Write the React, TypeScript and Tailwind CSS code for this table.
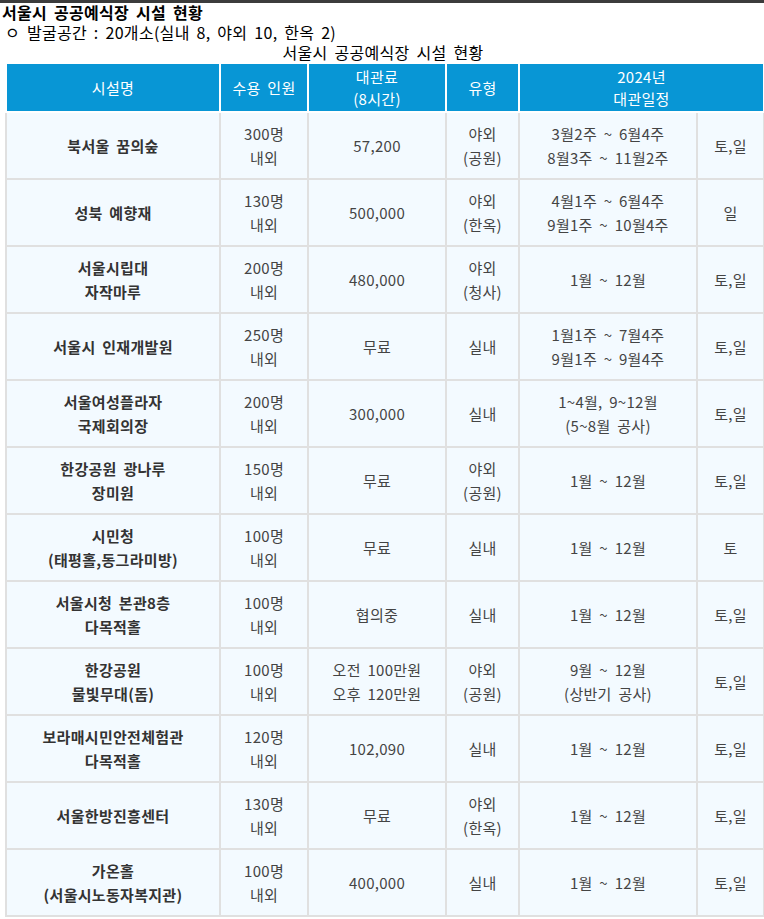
import React from "react";

type Row = { name: string[]; cap: string[]; fee: string[]; type: string[]; sched: string[]; days: string };

const rows: Row[] = [
  { name: ["북서울 꿈의숲"], cap: ["300명", "내외"], fee: ["57,200"], type: ["야외", "(공원)"], sched: ["3월2주 ~ 6월4주", "8월3주 ~ 11월2주"], days: "토,일" },
  { name: ["성북 예향재"], cap: ["130명", "내외"], fee: ["500,000"], type: ["야외", "(한옥)"], sched: ["4월1주 ~ 6월4주", "9월1주 ~ 10월4주"], days: "일" },
  { name: ["서울시립대", "자작마루"], cap: ["200명", "내외"], fee: ["480,000"], type: ["야외", "(청사)"], sched: ["1월 ~ 12월"], days: "토,일" },
  { name: ["서울시 인재개발원"], cap: ["250명", "내외"], fee: ["무료"], type: ["실내"], sched: ["1월1주 ~ 7월4주", "9월1주 ~ 9월4주"], days: "토,일" },
  { name: ["서울여성플라자", "국제회의장"], cap: ["200명", "내외"], fee: ["300,000"], type: ["실내"], sched: ["1~4월, 9~12월", "(5~8월 공사)"], days: "토,일" },
  { name: ["한강공원 광나루", "장미원"], cap: ["150명", "내외"], fee: ["무료"], type: ["야외", "(공원)"], sched: ["1월 ~ 12월"], days: "토,일" },
  { name: ["시민청", "(태평홀,동그라미방)"], cap: ["100명", "내외"], fee: ["무료"], type: ["실내"], sched: ["1월 ~ 12월"], days: "토" },
  { name: ["서울시청 본관8층", "다목적홀"], cap: ["100명", "내외"], fee: ["협의중"], type: ["실내"], sched: ["1월 ~ 12월"], days: "토,일" },
  { name: ["한강공원", "물빛무대(돔)"], cap: ["100명", "내외"], fee: ["오전 100만원", "오후 120만원"], type: ["야외", "(공원)"], sched: ["9월 ~ 12월", "(상반기 공사)"], days: "토,일" },
  { name: ["보라매시민안전체험관", "다목적홀"], cap: ["120명", "내외"], fee: ["102,090"], type: ["실내"], sched: ["1월 ~ 12월"], days: "토,일" },
  { name: ["서울한방진흥센터"], cap: ["130명", "내외"], fee: ["무료"], type: ["야외", "(한옥)"], sched: ["1월 ~ 12월"], days: "토,일" },
  { name: ["가온홀", "(서울시노동자복지관)"], cap: ["100명", "내외"], fee: ["400,000"], type: ["실내"], sched: ["1월 ~ 12월"], days: "토,일" },
];

function Lines({ lines }: { lines: string[] }) {
  return (
    <>
      {lines.map((l, i) => (
        <div key={i}>{l}</div>
      ))}
    </>
  );
}

const td = "border-2 border-[#e0e0e0] bg-[#f3faff] text-center align-middle h-[67px] p-0 leading-[24px]";
const th = "border-2 border-white bg-[#0896d5] text-white font-normal text-center align-middle p-0 leading-[22px]";

export default function App() {
  return (
    <div
      className="w-[764px] min-h-[919px] bg-white text-[#222] [word-spacing:3px] tracking-[0.3px]"
      style={{ fontFamily: '"Noto Sans CJK KR", "Noto Sans", sans-serif' }}
    >
      <div className="h-[3px] bg-[#3c3c3c]" />
      <div className="pl-[2px] text-[16px] leading-[19px] font-bold text-black">서울시 공공예식장 시설 현황</div>
      <div className="pl-[5px] text-[16px] leading-[20px] text-black">ㅇ 발굴공간 : 20개소(실내 8, 야외 10, 한옥 2)</div>
      <div className="pl-[5px] w-[761px]">
        <div className="text-center text-[16px] leading-[20px] text-black">서울시 공공예식장 시설 현황</div>
        <table className="border-collapse text-[15px] table-fixed w-[758px]">
          <colgroup>
            <col className="w-[214px]" />
            <col className="w-[88px]" />
            <col className="w-[138px]" />
            <col className="w-[73px]" />
            <col className="w-[178px]" />
            <col className="w-[67px]" />
          </colgroup>
          <thead>
            <tr>
              <th className={th + " h-[49px]"}>시설명</th>
              <th className={th}>수용 인원</th>
              <th className={th}>
                대관료
                <br />
                (8시간)
              </th>
              <th className={th}>유형</th>
              <th className={th} colSpan={2}>
                2024년
                <br />
                대관일정
              </th>
            </tr>
          </thead>
          <tbody>
            {rows.map((r, i) => (
              <tr key={i}>
                <td className={td + " font-semibold text-[#333]"}>
                  <Lines lines={r.name} />
                </td>
                <td className={td + " text-[#444]"}>
                  <Lines lines={r.cap} />
                </td>
                <td className={td + " text-[#444]"}>
                  <Lines lines={r.fee} />
                </td>
                <td className={td + " text-[#444]"}>
                  <Lines lines={r.type} />
                </td>
                <td className={td + " text-[#444]"}>
                  <Lines lines={r.sched} />
                </td>
                <td className={td + " text-[#444]"}>{r.days}</td>
              </tr>
            ))}
          </tbody>
        </table>
      </div>
    </div>
  );
}
